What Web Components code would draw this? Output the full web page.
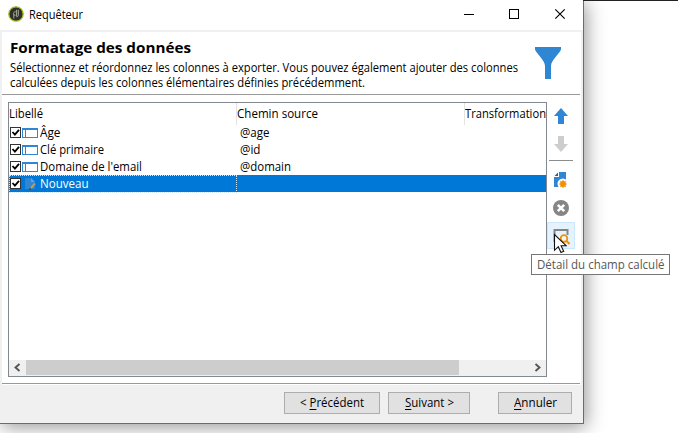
<!DOCTYPE html>
<html lang="fr"><head><meta charset="utf-8"><title>Requêteur</title>
<style>
html,body{margin:0;width:678px;height:433px;overflow:hidden;background:#fff}
body{font:12px/16px "Open Sans","Noto Sans",sans-serif;color:#000}
</style></head><body>
<query-app></query-app>
<script>
const define=(name,html,init)=>customElements.define(name,class extends HTMLElement{
  constructor(){super();this.attachShadow({mode:'open'}).innerHTML=html;}
  connectedCallback(){if(init)init(this,this.shadowRoot);}
});

/* Text run condensed or stretched to the width given in its "w" attribute. */
define('fit-text',`<style>:host{display:block;white-space:nowrap;flex:none}span{display:inline-block;transform-origin:0 0;vertical-align:top}</style><span><slot></slot></span>`,
(el,r)=>{const s=r.querySelector('span'),w=+el.getAttribute('w');
  const n=s.getBoundingClientRect().width;el.style.width=w+'px';s.style.transform='scaleX('+w/n+')';});

define('title-bar',`<style>
:host{display:flex;height:30px;background:#fff;border-bottom:2px solid #f0f0f0;padding-left:8px;align-items:flex-start}
.logo{margin:6px 5px 0 0;flex:none}fit-text{margin-top:7px}
.ctl{margin-left:auto;flex:none}
</style>
<svg class="logo" width="16" height="16"><circle cx="8" cy="8" r="7.200" fill="#2d2f2b" stroke="#a5bd24" stroke-width="1.300"/><path d="M5.800 12.500V8.500M7.800 5.800C4.800 5.500 4.500 9.500 7.500 9.300M8.600 3.800V10.500M10.300 3.800V9c0 1.200-.6 1.800-1.700 1.800" fill="none" stroke="#a9aa9c" stroke-width="1"/></svg>
<fit-text w="54">Requêteur</fit-text>
<svg class="ctl" width="119" height="30" fill="none" stroke="#000" shape-rendering="crispEdges"><path d="M0 14.500h10M45.500 9.500h9v9h-9z"/><path d="M91.300 9.300l9.400 9.400M100.700 9.300l-9.400 9.400" shape-rendering="auto" stroke-width="1.150"/></svg>`);

define('page-header',`<style>
:host{display:flex;height:62px;border-bottom:1px solid #999;margin-right:1px;padding-left:8px}
.t{flex:1;padding-top:5px}.h{font-weight:700;font-size:15px;line-height:20px}.l{line-height:15px}.first{margin-top:3px}
svg{margin:14px 18px 0 0;flex:none}
</style>
<div class="t"><fit-text class="h" w="181">Formatage des données</fit-text>
<fit-text class="l first" w="508">Sélectionnez et réordonnez les colonnes à exporter. Vous pouvez également ajouter des colonnes</fit-text>
<fit-text class="l" w="355">calculées depuis les colonnes élémentaires définies précédemment.</fit-text></div>
<svg width="28" height="34"><path d="M1 1h26v2.500C26 7 17 14.500 17 20v12.500q0 .5-.5.5h-5q-.5 0-.5-.5V20C11 14.500 2 7 1 3.500z" fill="#2f86d2"/></svg>`);

define('column-row',`<style>
:host{display:grid;grid-template-columns:228px 1fr;height:17px;line-height:18px}
.a{display:flex;align-items:flex-start;box-sizing:border-box;padding-left:1px}
svg{flex:none}.b{padding-left:3px}
:host([selected]){background:#0078d7;color:#fff}
:host([selected]) .a{outline:1px dotted #cfe6fa;outline-offset:-1px}
</style>
<div class="a"><svg width="30" height="17"><rect x=".5" y="3.500" width="10" height="10" fill="#fff" stroke="#333"/><path d="M2.500 8l2.400 2.700L9 5.800" fill="none" stroke="#000" stroke-width="1.800"/><g class="icon"></g></svg><slot name="label"></slot></div><div class="b"><slot name="source"></slot></div>`,
(el,r)=>{r.querySelector('.icon').innerHTML=el.hasAttribute('selected')
 ?'<path d="M15 3h6l4 4v7H15z" fill="#2f86d2"/><path d="M21 3v4h4z" fill="#5ba4e6"/><path d="M20.500 13.500l4.500-5" stroke="#c49a58" stroke-width="1.900"/><path d="M19.500 14.700l1.300-1.700" stroke="#54483a" stroke-width="1.500"/>'
 :'<path d="M12 4h16v10H12z" fill="#2f86d2"/><path d="M13 6h2v7h-2zM16 6h11v7H16z" fill="#fff"/>';});

define('column-list',`<style>
:host{display:flex;flex-direction:column;box-sizing:border-box;width:539px;height:275px;border:1px solid #828790;background:#fff;overflow:hidden;flex:none}
.head{display:grid;grid-template-columns:227px 228px 1fr;height:21px;line-height:22px;flex:none}
.head div+div{border-left:1px solid #e3e3e3}
.rows{flex:1}.bar{height:16px;display:flex;background:#f0f0f0}
.thumb{width:433px;height:15px;background:#cdcdcd}.bar svg{flex:none}
.bar svg:last-child{margin-left:auto}
</style>
<div class="head"><div><fit-text w="34">Libellé</fit-text></div><div><fit-text w="81">Chemin source</fit-text></div><div><fit-text w="81">Transformation</fit-text></div></div>
<div class="rows">
<column-row><fit-text slot="label" w="20.500">Âge</fit-text><fit-text slot="source" w="29.500">@age</fit-text></column-row>
<column-row><fit-text slot="label" w="64">Clé primaire</fit-text><fit-text slot="source" w="20.500">@id</fit-text></column-row>
<column-row><fit-text slot="label" w="102">Domaine de l'email</fit-text><fit-text slot="source" w="51">@domain</fit-text></column-row>
<column-row selected><fit-text slot="label" w="48.500">Nouveau</fit-text></column-row>
</div>
<div class="bar"><svg width="17" height="16"><path d="M10.500 4L6.500 7.500l4 3.500" fill="none" stroke="#555" stroke-width="1.900"/></svg><div class="thumb"></div><svg width="17" height="16"><path d="M6.500 4l4 3.500-4 3.500" fill="none" stroke="#555" stroke-width="1.900"/></svg></div>`);

define('tool-button',`<style>:host{display:flex;box-sizing:border-box;width:28px;height:28px;align-items:center;justify-content:center;border:1px solid transparent}:host([hot]){background:#e5f3ff;border-color:#cce8ff;height:27px}</style><slot></slot>`);

define('tool-strip',`<style>
:host{display:flex;flex-direction:column;width:28px}
hr{width:24px;height:1px;border:0;background:#8c8c8c;margin:2px 0 5px 2px}svg{display:block}
</style>
<tool-button><svg width="16" height="18"><path d="M8 1l7 8h-4v8H5V9H1z" fill="#2f86d2"/></svg></tool-button>
<tool-button><svg width="16" height="18"><path d="M8 17l7-8h-4V1H5v8H1z" fill="#cdcdcd"/></svg></tool-button>
<hr>
<tool-button><svg width="16" height="18"><path d="M6 1h7v9H9l-3 6H1V6h5z" fill="#2f86d2"/><path d="M1.500 5L5 1.500V5z" fill="#1b64a8"/><circle cx="9.800" cy="12.800" r="5.300" fill="#fff"/><path d="M10 9v8M6 13h8M7.200 10.200l5.600 5.600M12.800 10.200l-5.600 5.600" stroke="#f3a52f" stroke-width="1.200"/><circle cx="10" cy="13" r="2.900" fill="#f09000"/></svg></tool-button>
<tool-button><svg width="16" height="16"><circle cx="8" cy="8" r="8" fill="#858585"/><path d="M4.800 4.800l6.400 6.400M11.200 4.800l-6.400 6.400" stroke="#fff" stroke-width="2.600"/></svg></tool-button>
<tool-button hot><svg width="18" height="18"><path d="M2.500 15V3h13v5" fill="none" stroke="#858585" stroke-width="2"/><circle cx="12" cy="11.500" r="3.300" fill="#f4f7fa" stroke="#f09000" stroke-width="1.700"/><path d="M14.300 13.800l3.200 3.200" stroke="#f09000" stroke-width="2"/></svg></tool-button>`);

define('push-button',`<style>
:host{display:flex;box-sizing:border-box;height:22px;border:1px solid #adadad;background:#e1e1e1;justify-content:center}
</style><slot></slot>`);

define('dialog-footer',`<style>
:host{display:flex;flex:none;box-sizing:border-box;height:38px;background:#f0f0f0;padding:7px 9px 0 282px}
push-button{line-height:20px}
.p{width:96px}.s{width:82px;margin-left:8px}.a{width:74px;margin-left:28px}
u{text-decoration:underline;text-underline-offset:2px;text-decoration-thickness:1px}
</style>
<push-button class="p"><fit-text w="64">&lt; <u>P</u>récédent</fit-text></push-button>
<push-button class="s"><fit-text w="49"><u>S</u>uivant &gt;</fit-text></push-button>
<push-button class="a"><fit-text w="43"><u>A</u>nnuler</fit-text></push-button>`);

define('query-window',`<style>
:host{display:flex;flex-direction:column;box-sizing:border-box;width:584px;height:424px;border-right:1px solid #6b6b6b;border-bottom:1px solid #6b6b6b;background:#f0f0f0;box-shadow:2px 3px 18px rgba(0,0,0,.42)}
.body{margin:0 2px;background:#fff;height:353px;flex:none}
.work{display:flex;padding:7px 0 6px 6px}
.rule{height:1px;background:#999;margin-right:1px}
dialog-footer{margin:0 2px}
</style>
<title-bar></title-bar>
<div class="body"><page-header></page-header><div class="work"><column-list></column-list><tool-strip></tool-strip></div><div class="rule"></div></div>
<dialog-footer></dialog-footer>`);

define('tool-tip',`<style>:host{box-sizing:border-box;width:139px;height:21px;border:1px solid #767676;background:#fff;color:#575757;padding:2px 0 0 5px}</style><slot></slot>`);

define('query-app',`<style>
:host{display:block;position:relative;width:678px;height:433px;overflow:hidden}
.edge{position:absolute;left:583px;right:0;top:0;height:1px;background:#222}
tool-tip{position:absolute;left:531px;top:254px}
.cursor{position:absolute;left:553px;top:233px}
</style>
<query-window></query-window><div class="edge"></div>
<svg class="cursor" width="14" height="21"><path d="M1.500 1.500v15.800l3.800-3.600 2.700 5.800 2.700-1.200-2.600-5.600h5z" fill="#fff" stroke="#111" stroke-width="1.100"/></svg>
<tool-tip><fit-text w="127.500">Détail du champ calculé</fit-text></tool-tip>`);
</script></body></html>
